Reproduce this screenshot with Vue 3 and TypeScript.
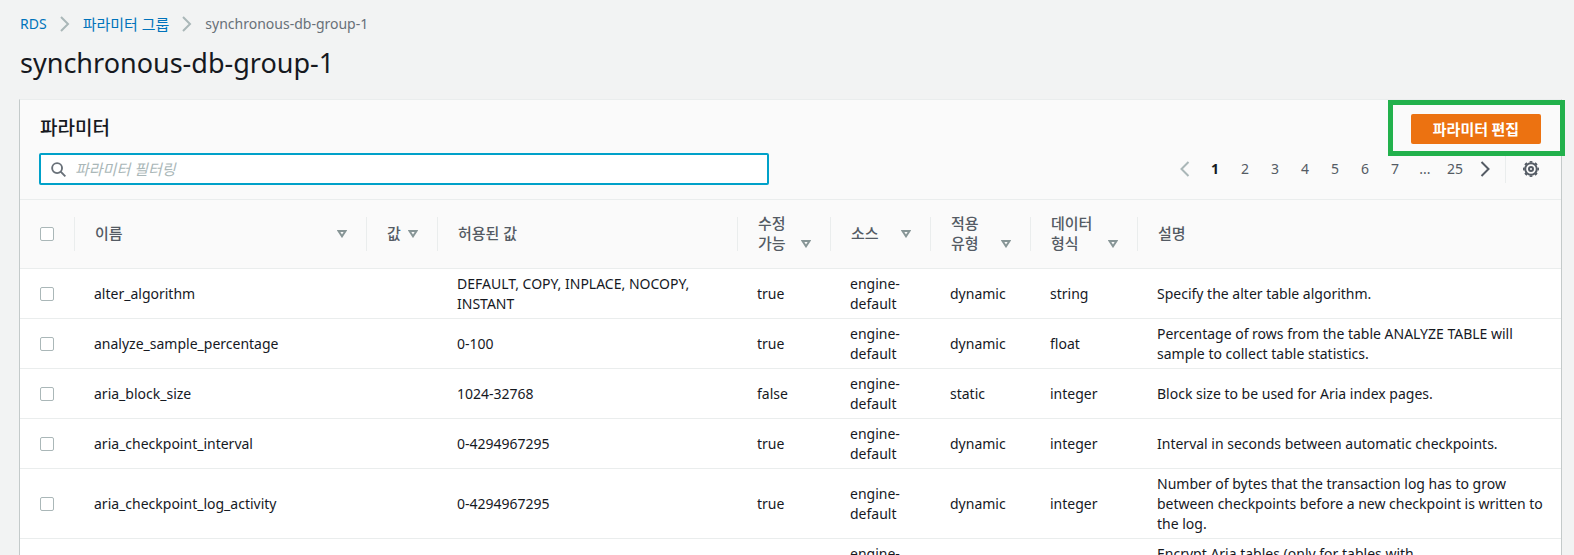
<script setup lang="ts">
import { ref } from 'vue'

interface Column {
  key: string
  label: string[]
  sortable: boolean
}

interface Parameter {
  name: string
  allowed: string
  modifiable: string
  source: string
  applyType: string
  dataType: string
  description: string
}

const columns: Column[] = [
  { key: 'name', label: ['이름'], sortable: true },
  { key: 'value', label: ['값'], sortable: true },
  { key: 'allowed', label: ['허용된 값'], sortable: false },
  { key: 'modifiable', label: ['수정', '가능'], sortable: true },
  { key: 'source', label: ['소스'], sortable: true },
  { key: 'apply', label: ['적용', '유형'], sortable: true },
  { key: 'type', label: ['데이터', '형식'], sortable: true },
  { key: 'description', label: ['설명'], sortable: false },
]

const source = 'engine-default'

const parameters: Parameter[] = [
  { name: 'alter_algorithm', allowed: 'DEFAULT, COPY, INPLACE, NOCOPY, INSTANT', modifiable: 'true', source, applyType: 'dynamic', dataType: 'string', description: 'Specify the alter table algorithm.' },
  { name: 'analyze_sample_percentage', allowed: '0-100', modifiable: 'true', source, applyType: 'dynamic', dataType: 'float', description: 'Percentage of rows from the table ANALYZE TABLE will sample to collect table statistics.' },
  { name: 'aria_block_size', allowed: '1024-32768', modifiable: 'false', source, applyType: 'static', dataType: 'integer', description: 'Block size to be used for Aria index pages.' },
  { name: 'aria_checkpoint_interval', allowed: '0-4294967295', modifiable: 'true', source, applyType: 'dynamic', dataType: 'integer', description: 'Interval in seconds between automatic checkpoints.' },
  { name: 'aria_checkpoint_log_activity', allowed: '0-4294967295', modifiable: 'true', source, applyType: 'dynamic', dataType: 'integer', description: 'Number of bytes that the transaction log has to grow between checkpoints before a new checkpoint is written to the log.' },
  { name: 'aria_encrypt_tables', allowed: '0, 1', modifiable: 'true', source, applyType: 'dynamic', dataType: 'boolean', description: 'Encrypt Aria tables (only for tables with ROW_FORMAT=PAGE).' },
]

const pages = ['1', '2', '3', '4', '5', '6', '7', '...', '25']
const currentPage = ref('1')
const filter = ref('')
const selected = ref<string[]>([])
</script>

<template>
  <div class="page">
    <nav class="breadcrumb" aria-label="breadcrumb">
      <a href="#rds">RDS</a>
      <svg class="crumb-sep" viewBox="0 0 10 16" aria-hidden="true"><path d="m1 1 7 7-7 7" /></svg>
      <a class="ko" href="#groups">파라미터 그룹</a>
      <svg class="crumb-sep" viewBox="0 0 10 16" aria-hidden="true"><path d="m1 1 7 7-7 7" /></svg>
      <span>synchronous-db-group-1</span>
    </nav>
    <h1>synchronous-db-group-1</h1>

    <section class="card">
      <header class="card-head">
        <div class="title-row">
          <h2>파라미터</h2>
          <div class="highlight">
            <button class="primary" type="button">파라미터 편집</button>
          </div>
        </div>
        <div class="tools">
          <label class="search">
            <svg viewBox="0 0 16 16" aria-hidden="true"><circle cx="6.5" cy="6.5" r="5.300" /><path d="m10.300 10.300 5 5" /></svg>
            <input v-model="filter" type="text" placeholder="파라미터 필터링" aria-label="파라미터 필터링" />
          </label>
          <div class="pager">
            <button class="page-btn prev" type="button" aria-label="Previous" disabled>
              <svg viewBox="0 0 10 16" aria-hidden="true"><path d="M8.500 1l-7 7 7 7" /></svg>
            </button>
            <template v-for="p in pages" :key="p">
              <span v-if="p === '...'" class="page-btn">...</span>
              <button v-else class="page-btn" :class="{ current: p === currentPage }" type="button" @click="currentPage = p">{{ p }}</button>
            </template>
            <button class="page-btn next" type="button" aria-label="Next">
              <svg viewBox="0 0 10 16" aria-hidden="true"><path d="m1.500 1 7 7-7 7" /></svg>
            </button>
            <button class="gear" type="button" aria-label="Settings">
              <svg viewBox="0 0 16 16" aria-hidden="true">
                <circle cx="8" cy="8" r="5.800" />
                <circle class="teeth" cx="8" cy="8" r="7.200" pathLength="16" />
                <circle cx="8" cy="8" r="2" />
              </svg>
            </button>
          </div>
        </div>
      </header>

      <table>
        <colgroup>
          <col class="c-check" />
          <col v-for="c in columns" :key="c.key" :class="'c-' + c.key" />
        </colgroup>
        <thead>
          <tr>
            <th scope="col"><div class="th-in check"><input type="checkbox" aria-label="모두 선택" /></div></th>
            <th v-for="c in columns" :key="c.key" scope="col">
              <div class="th-in">
                <span><template v-for="(line, i) in c.label" :key="line"><br v-if="i" />{{ line }}</template></span>
                <svg v-if="c.sortable" viewBox="0 0 10 8" aria-hidden="true"><path d="M1.500 1h7L5 6.300z" /></svg>
              </div>
            </th>
          </tr>
        </thead>
        <tbody>
          <tr v-for="p in parameters" :key="p.name">
            <td class="check"><input v-model="selected" type="checkbox" :value="p.name" :aria-label="p.name" /></td>
            <td>{{ p.name }}</td>
            <td></td>
            <td>{{ p.allowed }}</td>
            <td>{{ p.modifiable }}</td>
            <td>{{ p.source }}</td>
            <td>{{ p.applyType }}</td>
            <td>{{ p.dataType }}</td>
            <td>{{ p.description }}</td>
          </tr>
        </tbody>
      </table>
    </section>
  </div>
</template>

<style>
body {
  margin: 0;
  background: #f2f3f3;
}
</style>

<style scoped>
.page {
  box-sizing: border-box;
  height: 100vh;
  overflow: hidden;
  padding: 14px 12px 0 19px;
  background: #f2f3f3;
  color: #16191f;
  font: 14px/20px "Noto Sans", "Noto Sans CJK KR", sans-serif;
}

.breadcrumb {
  display: flex;
  align-items: center;
  padding-left: 1px;
  color: #687078;
}

.breadcrumb a {
  color: #0073bb;
  text-decoration: none;
}

.breadcrumb .ko {
  font-size: 15px;
}

.crumb-sep {
  width: 10px;
  height: 16px;
  margin: 0 13px;
  fill: none;
  stroke: #aab7b8;
  stroke-width: 2;
}

h1 {
  margin: 11px 0 18px 1px;
  font-size: 27px;
  font-weight: 400;
  line-height: 36px;
}

.card {
  border: 1px solid #eaeded;
  border-right-color: #c4caca;
  border-left-color: #c4caca;
  background: #fff;
}

.card-head {
  padding: 14px 20px 14px 19px;
  border-bottom: 1px solid #eaeded;
  background: #fafafa;
}

.title-row,
.tools {
  display: flex;
  align-items: center;
  justify-content: space-between;
}

h2 {
  margin: 0;
  padding: 0 0 2px 1px;
  font-size: 19px;
  font-weight: 500;
  line-height: 28px;
}

.highlight {
  position: relative;
}

.highlight::after {
  position: absolute;
  inset: -14px -24px -12px -23px;
  border: 5px solid #22b14c;
  content: "";
  pointer-events: none;
}

.primary {
  display: block;
  height: 30px;
  padding: 0 22px;
  border: 0;
  border-radius: 2px;
  background: #ec7211;
  color: #fff;
  font: 700 15px/28px "Noto Sans CJK KR", sans-serif;
}

.tools {
  margin-top: 9px;
}

.search {
  display: flex;
  box-sizing: border-box;
  flex: 0 1 730px;
  align-items: center;
  gap: 9px;
  height: 32px;
  padding: 0 10px;
  border: 2px solid #00a1c9;
  border-radius: 2px;
  background: #fff;
}

.search svg {
  width: 15px;
  height: 15px;
  fill: none;
  stroke: #687078;
  stroke-width: 2;
}

.search input {
  flex: 1;
  min-width: 0;
  padding: 0;
  border: 0;
  outline: 0;
  background: transparent;
  color: #16191f;
  font: 15px/20px "Noto Sans", "Noto Sans CJK KR", sans-serif;
}

.search input::placeholder {
  color: #aab7b8;
  font-style: italic;
  opacity: 1;
}

.pager {
  display: flex;
  align-items: center;
}

.page-btn,
.gear {
  display: flex;
  box-sizing: border-box;
  align-items: center;
  justify-content: center;
  width: 30px;
  height: 28px;
  padding: 0;
  border: 0;
  background: none;
  color: #545b64;
  font: 14px/20px "Noto Sans", sans-serif;
}

.page-btn.current {
  color: #16191f;
  font-weight: 700;
}

.page-btn svg {
  width: 10px;
  height: 16px;
  fill: none;
  stroke: #545b64;
  stroke-width: 2;
}

.page-btn.prev svg {
  stroke: #aab7b8;
}

.gear {
  width: 36px;
  margin-left: 5px;
  padding-left: 15px;
  border-left: 1px solid #eaeded;
}

.gear svg {
  width: 16px;
  height: 16px;
  fill: none;
  stroke: #545b64;
  stroke-width: 2;
}

.gear .teeth {
  stroke-dasharray: 1 1;
  stroke-dashoffset: 0.5;
  stroke-width: 1.6;
}

table {
  width: 100%;
  border-collapse: separate;
  border-spacing: 0;
  table-layout: fixed;
}

.c-check { width: 55px; }
.c-name { width: 292px; }
.c-value { width: 71px; }
.c-allowed { width: 300px; }
.c-modifiable { width: 93px; }
.c-source { width: 100px; }
.c-apply { width: 100px; }
.c-type { width: 107px; }

th {
  padding: 17px 0;
  border-bottom: 1px solid #eaeded;
  background: #fafafa;
  color: #545b64;
  font-size: 15px;
  font-weight: 500;
  text-align: left;
}

.th-in {
  display: flex;
  box-sizing: border-box;
  align-items: center;
  justify-content: space-between;
  height: 34px;
  padding: 0 19px 0 20px;
  border-right: 1px solid #eaeded;
  white-space: nowrap;
}

.th-in span,
.th-in input {
  margin-bottom: 2px;
}

th:last-child .th-in {
  border-right: 0;
}

.th-in svg {
  width: 10px;
  height: 8px;
  fill: none;
  stroke: #879596;
  stroke-width: 2;
}

.th-in:has(br) svg {
  margin-top: 20px;
}

td {
  height: 40px;
  padding: 5px 10px 4px 19px;
  border-bottom: 1px solid #eaeded;
  vertical-align: middle;
}

td.check {
  padding-left: 20px;
}

input[type="checkbox"] {
  display: block;
  box-sizing: border-box;
  width: 14px;
  height: 14px;
  margin: 0;
  border: 1px solid #aab7b8;
  border-radius: 2px;
  background: #fff;
  appearance: none;
}

input[type="checkbox"]:checked {
  background: #00a1c9;
}
</style>
